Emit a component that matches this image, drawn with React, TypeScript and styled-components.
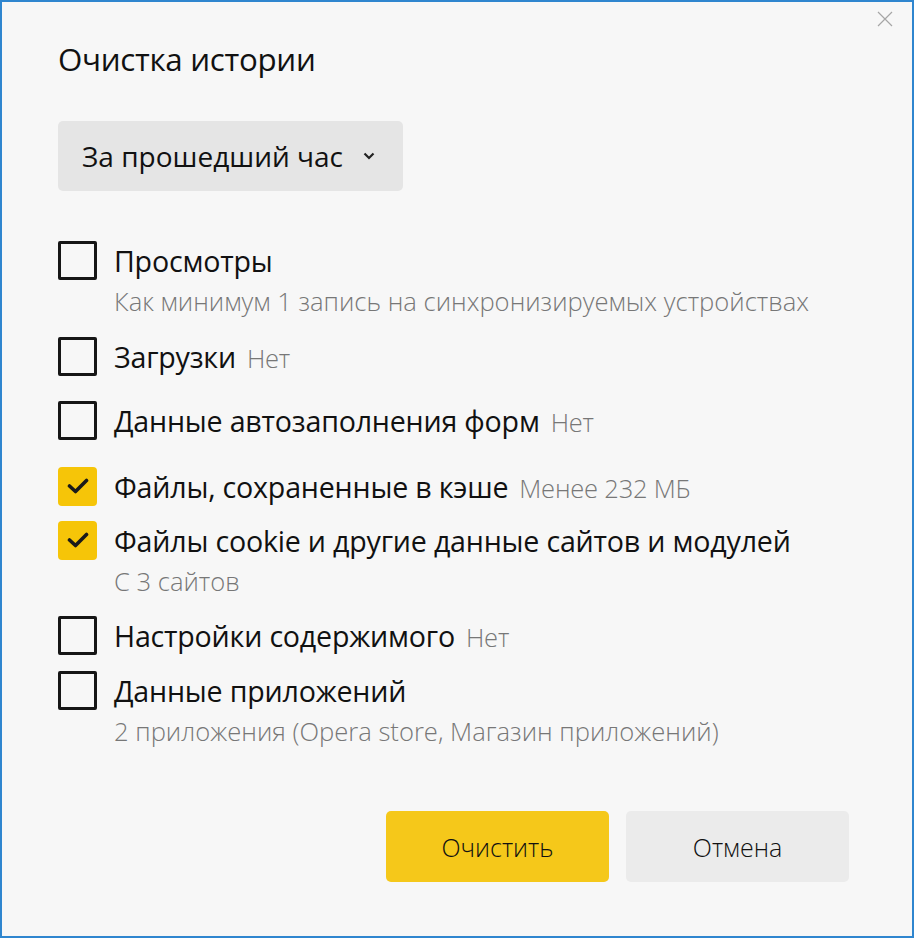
import React from "react";
import styled, { createGlobalStyle } from "styled-components";

const Global = createGlobalStyle`
  html, body { margin: 0; padding: 0; background: #f7f7f7; }
  body { font-family: "Open Sans", "Noto Sans", sans-serif; }
`;

const Window = styled.div`
  box-sizing: border-box;
  width: 914px;
  height: 938px;
  border: 2px solid #2f86cf;
  background: #f7f7f7;
  position: relative;
  padding: 36px 63px 0 56px;
  display: flex;
  flex-direction: column;
`;

const Close = styled.button`
  position: absolute;
  top: 8px;
  right: 18px;
  width: 18px;
  height: 18px;
  padding: 0;
  border: none;
  background: transparent;
  display: flex;
  align-items: center;
  justify-content: center;
`;

const Title = styled.h1`
  margin: 0;
  font-size: 31.3px;
  line-height: 42px;
  font-weight: 400;
  color: #111;
  letter-spacing: -0.3px;
`;

const Select = styled.div`
  margin-top: 41px;
  align-self: flex-start;
  box-sizing: border-box;
  height: 70px;
  width: 345px;
  background: #e5e5e5;
  border-radius: 5px;
  display: flex;
  align-items: center;
  padding: 0 24px;
  gap: 20px;
  font-size: 28px;
  color: #111;
`;

const List = styled.div`
  margin-top: 50px;
  display: flex;
  flex-direction: column;
`;

const Item = styled.div<{ $top: number }>`
  margin-top: ${(p) => p.$top}px;
  display: flex;
  flex-direction: column;
`;

const Row = styled.div`
  display: flex;
  align-items: center;
  height: 38px;
  gap: 17px;
`;

const Box = styled.span<{ $checked?: boolean }>`
  box-sizing: border-box;
  flex: none;
  width: 39px;
  height: 39px;
  border-radius: ${(p) => (p.$checked ? "4px" : "2px")};
  border: ${(p) => (p.$checked ? "none" : "3px solid #161616")};
  background: ${(p) => (p.$checked ? "#f6c508" : "transparent")};
  display: flex;
  align-items: center;
  justify-content: center;
`;

const Label = styled.span`
  font-size: 28.6px;
  color: #111;
  white-space: nowrap;
  letter-spacing: -0.2px;
`;

const Note = styled.span`
  font-size: 25.5px;
  color: #777;
  font-weight: 300;
  margin-left: 11px;
`;

const Sub = styled.div`
  margin-top: 8px;
  margin-left: 56px;
  line-height: 30px;
  font-size: 25.6px;
  color: #777;
  font-weight: 300;
  white-space: nowrap;
`;

const Buttons = styled.div`
  margin-top: 64px;
  display: flex;
  justify-content: flex-end;
  gap: 17px;
`;

const Button = styled.button<{ $primary?: boolean }>`
  width: 223px;
  height: 71px;
  border: none;
  border-radius: 5px;
  background: ${(p) => (p.$primary ? "#f5c81a" : "#ebebeb")};
  font-family: "Open Sans", "Noto Sans", sans-serif;
  font-size: 25px;
  font-weight: 300;
  color: #111;
  padding: 0;
`;

const Check = () => (
  <svg width="22" height="16" viewBox="0 0 22 16">
    <path d="M2.5 8 L8.5 13.5 L19.5 2.5" fill="none" stroke="#1a1a1a" strokeWidth="3.6" strokeLinecap="round" strokeLinejoin="round" />
  </svg>
);

type Entry = { label: string; note?: string; sub?: string; checked?: boolean; top: number };

const entries: Entry[] = [
  { label: "Просмотры", sub: "Как минимум 1 запись на синхронизируемых устройствах", top: 0 },
  { label: "Загрузки", note: "Нет", top: 20 },
  { label: "Данные автозаполнения форм", note: "Нет", top: 26 },
  { label: "Файлы, сохраненные в кэше", note: "Менее 232 МБ", checked: true, top: 28 },
  { label: "Файлы cookie и другие данные сайтов и модулей", sub: "С 3 сайтов", checked: true, top: 16 },
  { label: "Настройки содержимого", note: "Нет", top: 19 },
  { label: "Данные приложений", sub: "2 приложения (Opera store, Магазин приложений)", top: 17 },
];

export default function App() {
  return (
    <>
      <Global />
      <Window>
        <Close aria-label="Закрыть">
          <svg width="16" height="16" viewBox="0 0 16 16">
            <path d="M1 1 L15 15 M15 1 L1 15" stroke="#a6a6a6" strokeWidth="1.2" />
          </svg>
        </Close>
        <Title>Очистка истории</Title>
        <Select>
          <span>За прошедший час</span>
          <svg width="12" height="8" viewBox="0 0 12 8">
            <path d="M1.5 1.5 L6 6 L10.5 1.5" fill="none" stroke="#222" strokeWidth="2.2" />
          </svg>
        </Select>
        <List>
          {entries.map((e) => (
            <Item key={e.label} $top={e.top}>
              <Row>
                <Box $checked={e.checked}>{e.checked && <Check />}</Box>
                <Label>
                  {e.label}
                  {e.note && <Note>{e.note}</Note>}
                </Label>
              </Row>
              {e.sub && <Sub>{e.sub}</Sub>}
            </Item>
          ))}
        </List>
        <Buttons>
          <Button $primary>Очистить</Button>
          <Button>Отмена</Button>
        </Buttons>
      </Window>
    </>
  );
}
